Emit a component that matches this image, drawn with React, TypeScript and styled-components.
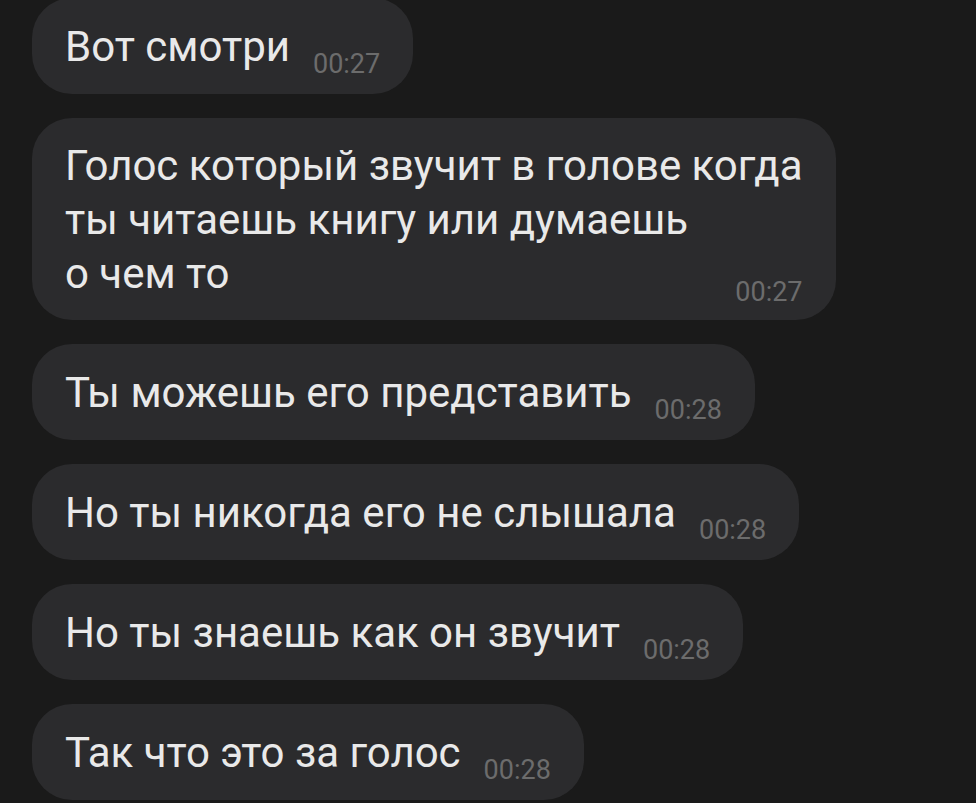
import styled, { createGlobalStyle } from "styled-components";

const GlobalStyle = createGlobalStyle`
  html, body {
    margin: 0;
    padding: 0;
    background: #1a1a1a;
    overflow: hidden;
  }
  body {
    font-family: Roboto, "Noto Sans", sans-serif;
  }
`;

const Page = styled.main`
  width: 976px;
  height: 803px;
  box-sizing: border-box;
  padding-left: 32px;
  overflow: hidden;
  background: #1a1a1a;
`;

const MessageList = styled.div`
  display: flex;
  flex-direction: column;
  align-items: flex-start;
  gap: 24px;
  margin-top: -2px;
`;

const Bubble = styled.div<{ $stacked?: boolean }>`
  display: flex;
  flex-direction: ${(p) => (p.$stacked ? "column" : "row")};
  align-items: flex-end;
  box-sizing: border-box;
  padding: 21px 33px 20px 33px;
  min-height: 96px;
  border-radius: 40px;
  background: #2b2b2d;
`;

const Text = styled.span`
  font-size: 42px;
  line-height: 54px;
  color: #e9e9e9;
  white-space: pre-line;
`;

const Time = styled.span<{ $stacked?: boolean }>`
  font-size: 27px;
  line-height: 27px;
  color: #6c6c6c;
  white-space: nowrap;
  margin-left: ${(p) => (p.$stacked ? "0" : "23px")};
  margin-top: ${(p) => (p.$stacked ? "-22px" : "0")};
  margin-bottom: ${(p) => (p.$stacked ? "-6px" : "-4px")};
`;

type Msg = { text: string; time: string; stacked?: boolean };

const messages: Msg[] = [
  { text: "Вот смотри", time: "00:27" },
  {
    text: "Голос который звучит в голове когда\nты читаешь книгу или думаешь\nо чем то",
    time: "00:27",
    stacked: true,
  },
  { text: "Ты можешь его представить", time: "00:28" },
  { text: "Но ты никогда его не слышала", time: "00:28" },
  { text: "Но ты знаешь как он звучит", time: "00:28" },
  { text: "Так что это за голос", time: "00:28" },
];

const App: React.FC = () => {
  return (
    <Page>
      <GlobalStyle />
      <MessageList>
        {messages.map((m, i) => (
          <Bubble key={i} $stacked={m.stacked}>
            <Text>{m.text}</Text>
            <Time $stacked={m.stacked}>{m.time}</Time>
          </Bubble>
        ))}
      </MessageList>
    </Page>
  );
};

export default App;
